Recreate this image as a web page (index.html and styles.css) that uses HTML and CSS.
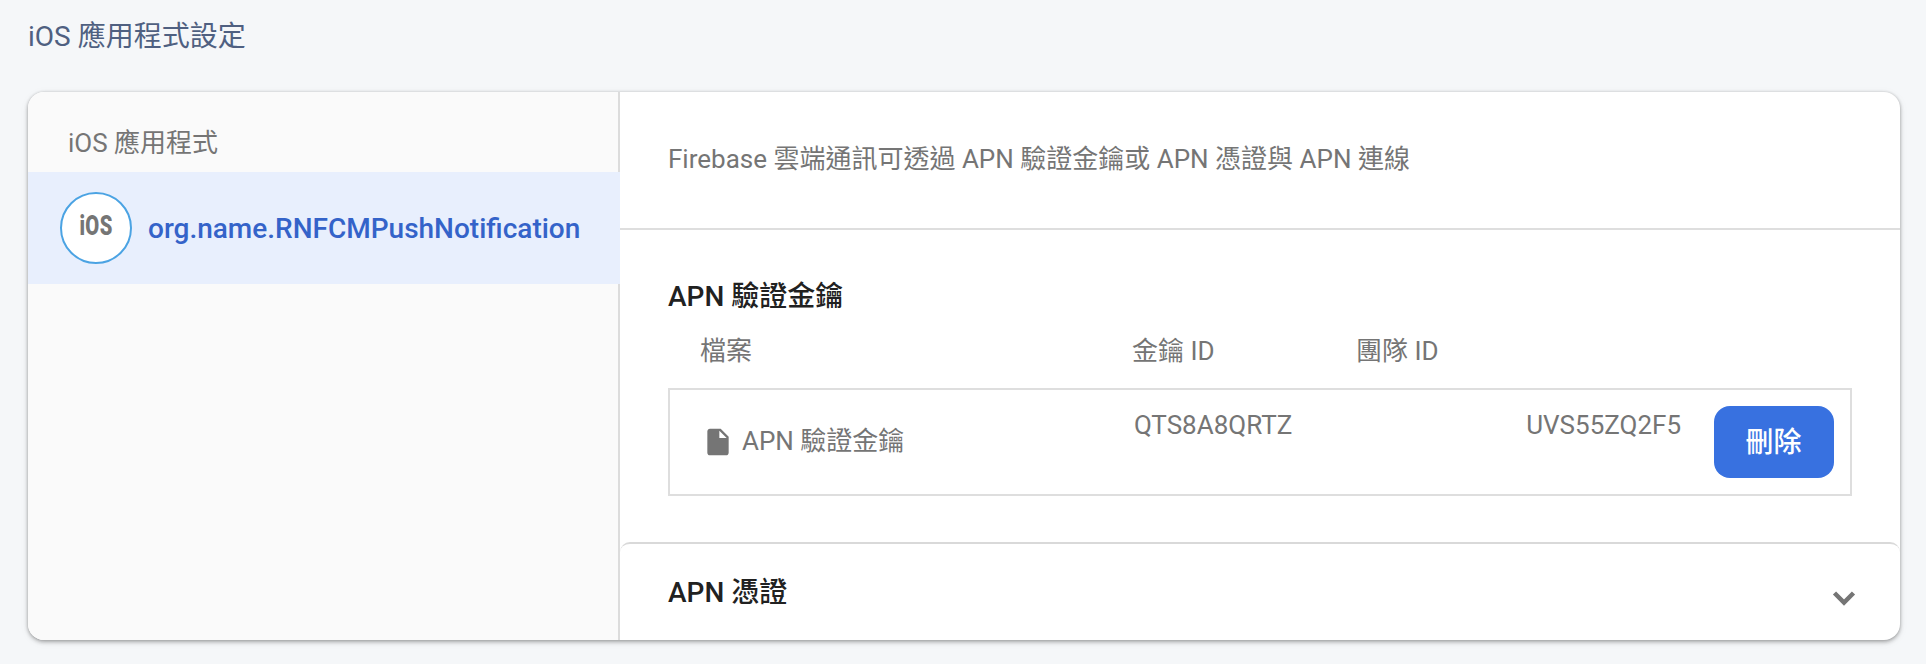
FILE: index.html
```html
<!DOCTYPE html>
<html lang="zh-Hant">
<head>
<meta charset="utf-8">
<title>iOS 應用程式設定</title>
<link rel="stylesheet" href="styles.css">
</head>
<body>
<h1 class="page-title">iOS 應用程式設定</h1>
<main class="card">
  <aside class="sidebar">
    <h2 class="sidebar-title">iOS 應用程式</h2>
    <div class="app-item">
      <span class="app-badge"><span class="badge-text">iOS</span></span>
      <span class="app-name">org.name.RNFCMPushNotification</span>
    </div>
  </aside>
  <section class="content">
    <p class="description">Firebase 雲端通訊可透過 APN 驗證金鑰或 APN 憑證與 APN 連線</p>
    <div class="key-section">
      <h3 class="section-title">APN 驗證金鑰</h3>
      <div class="columns">
        <span>檔案</span>
        <span>金鑰 ID</span>
        <span>團隊 ID</span>
      </div>
      <div class="key-row">
        <div class="key-file">
          <svg class="file-icon" viewBox="0 0 24 24"><path d="M6 2c-1.100 0-1.990.9-1.990 2L4 20c0 1.100.890 2 1.990 2H18c1.100 0 2-.9 2-2V8l-6-6H6zm7 7V3.500L18.500 9H13z"/></svg>
          <span>APN 驗證金鑰</span>
        </div>
        <span class="key-id">QTS8A8QRTZ</span>
        <span class="team-id">UVS55ZQ2F5</span>
        <button class="delete-button" type="button">刪除</button>
      </div>
    </div>
    <div class="certificate">
      <h3 class="section-title">APN 憑證</h3>
      <svg class="chevron" viewBox="0 0 44 44"><path d="M12.500 17L22 26.500 31.500 17"/></svg>
    </div>
  </section>
</main>
</body>
</html>
```
FILE: styles.css
```css
* { box-sizing: border-box; }

body {
  margin: 0;
  height: 664px;
  padding: 17px 26px 24px 28px;
  background: #f5f7f9;
  color: #757575;
  font: 400 26px/40px Roboto, "Noto Sans CJK TC", sans-serif;
}

h1, h2, h3, p { margin: 0; }

.page-title {
  margin-bottom: 35px;
  color: #4f6081;
  font-size: 28px;
  font-weight: 400;
  line-height: 40px;
}

.card {
  display: flex;
  height: 548px;
  overflow: hidden;
  border-radius: 16px;
  background: #fff;
  box-shadow: 0 2px 4px rgba(0, 0, 0, .3), 0 0 3px rgba(0, 0, 0, .14), 0 2px 12px rgba(0, 0, 0, .04);
}

.sidebar {
  width: 592px;
  padding-top: 31px;
  background: linear-gradient(to left, #dcdcdc 2px, #fafafa 2px);
}

.sidebar-title {
  padding-left: 40px;
  font-size: 26px;
  font-weight: 400;
  line-height: 40px;
}

.app-item {
  display: flex;
  align-items: center;
  gap: 16px;
  height: 112px;
  margin-top: 9px;
  padding-left: 32px;
  background: #e8effd;
}

.app-badge {
  display: flex;
  align-items: center;
  justify-content: center;
  width: 72px;
  height: 72px;
  padding-bottom: 4px;
  border: 2px solid #4ba3e3;
  border-radius: 50%;
  background: #fff;
}

.badge-text {
  font-size: 28px;
  font-weight: 900;
  letter-spacing: .5px;
  transform: scaleX(.72);
}

.app-name {
  padding-top: 2px;
  color: #3463c9;
  font-size: 28px;
  font-weight: 500;
}

.content {
  display: flex;
  flex: 1;
  flex-direction: column;
}

.description {
  height: 138px;
  padding: 47px 48px 0;
  border-bottom: 2px solid #dedede;
}

.key-section {
  height: 312px;
  padding: 47px 48px 0;
}

.section-title {
  color: #212121;
  font-size: 28px;
  font-weight: 500;
  line-height: 40px;
}

.columns {
  display: grid;
  grid-template-columns: 432px 224px 1fr;
  margin: 14px 0 17px;
  padding-left: 32px;
}

.key-row {
  display: flex;
  align-items: flex-start;
  height: 108px;
  padding: 16px 16px 0 32px;
  border: 2px solid #dedede;
}

.key-file {
  display: flex;
  align-items: center;
  gap: 8px;
  width: 432px;
  padding-top: 15px;
}

.file-icon {
  width: 32px;
  height: 32px;
  margin-top: 1px;
  fill: #757575;
}

.key-id,
.team-id { margin-top: -1px; }

.team-id { margin-left: auto; }

.delete-button {
  width: 120px;
  height: 72px;
  margin-left: 33px;
  padding: 2px 1px 0 0;
  border: 0;
  border-radius: 16px;
  background: #3871e0;
  color: #fff;
  font: inherit;
  font-size: 28px;
  font-weight: 500;
}

.certificate {
  display: flex;
  flex: 1;
  justify-content: space-between;
  padding: 29px 34px 0 48px;
  border-top: 2px solid #d9d9d9;
  border-radius: 10px 10px 0 0;
}

.chevron {
  width: 44px;
  height: 44px;
  margin-top: 3px;
  fill: none;
  stroke: #757575;
  stroke-width: 4.500px;
}
```
